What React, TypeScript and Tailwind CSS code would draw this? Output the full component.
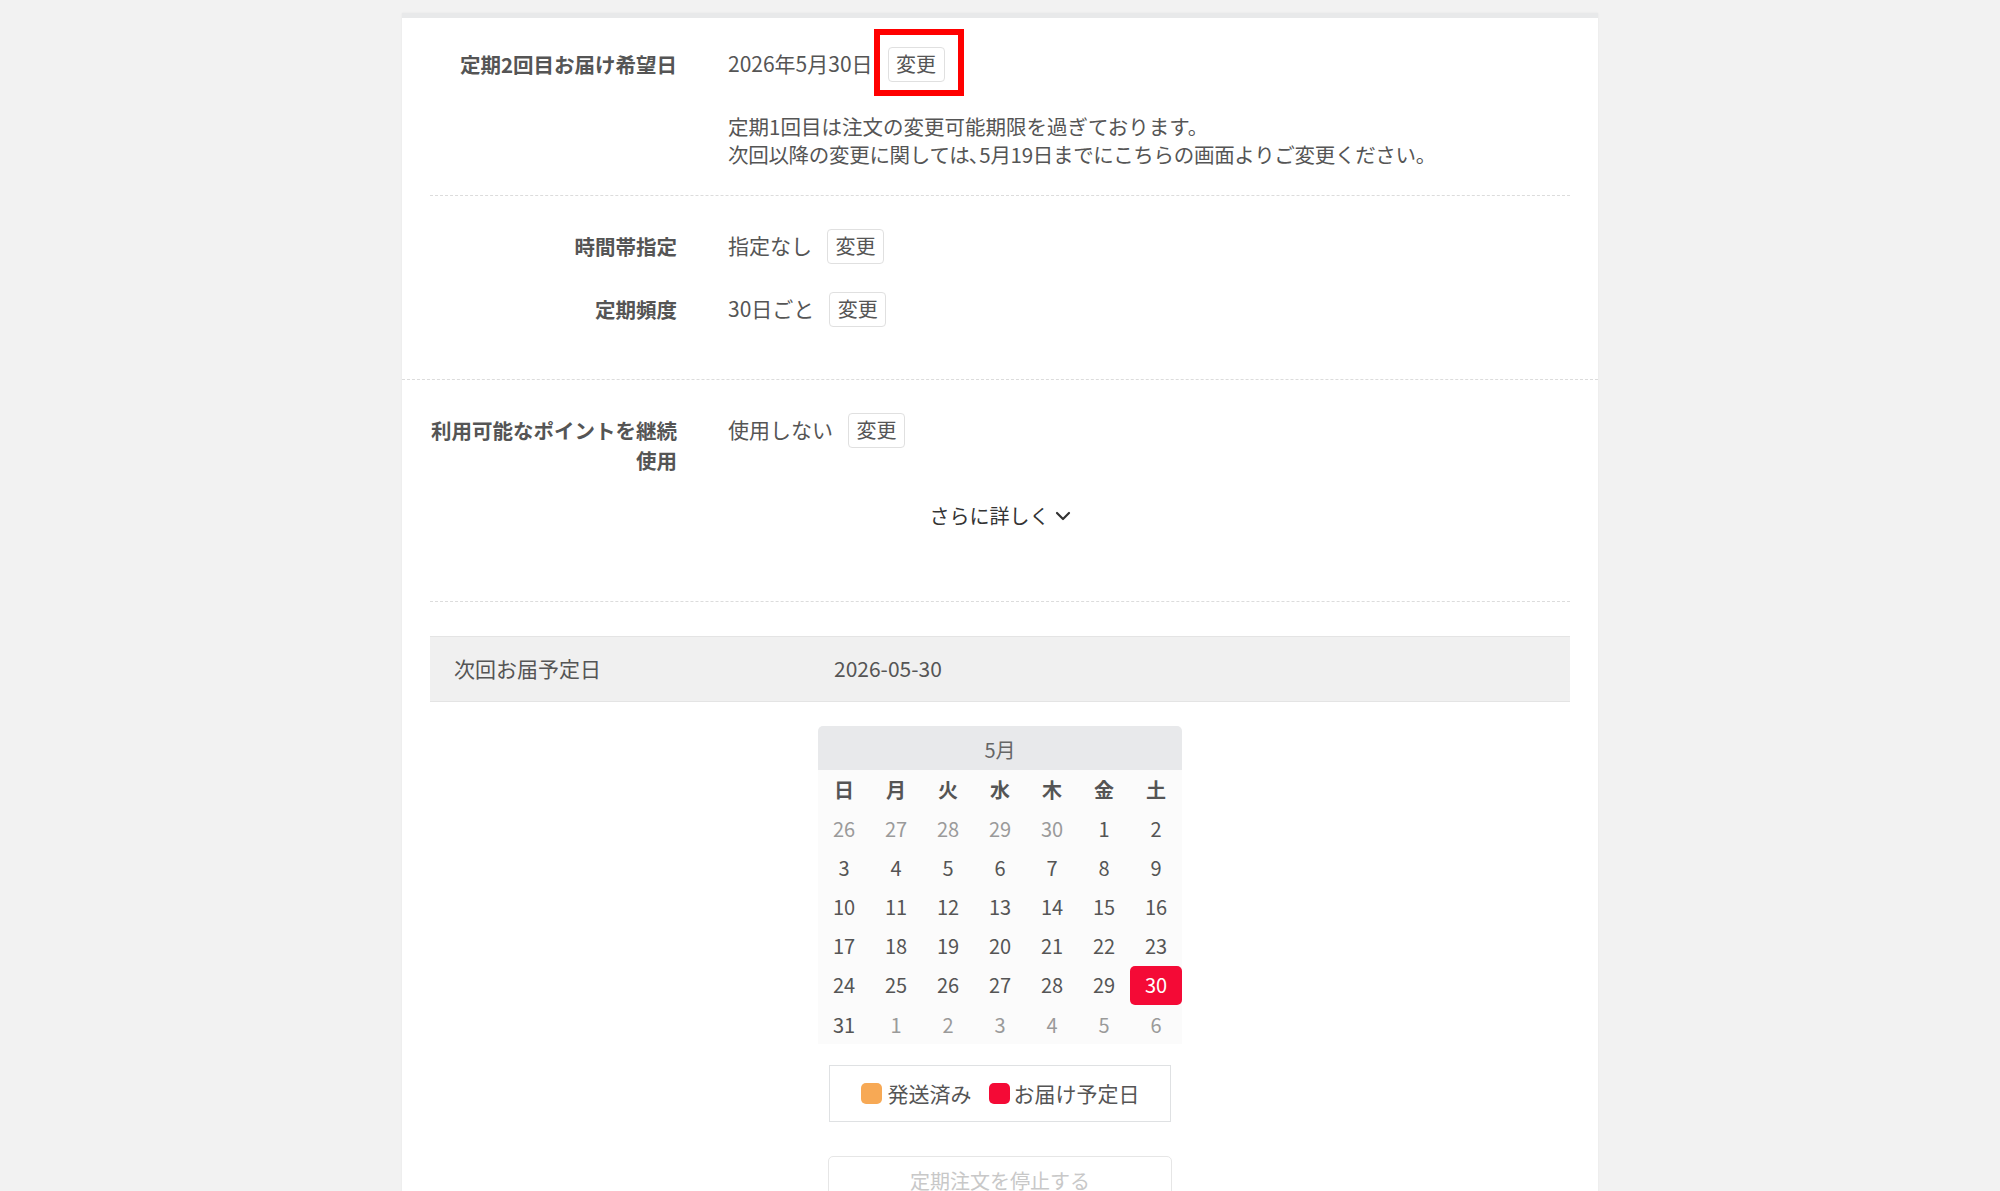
import React from "react";

const font = { fontFamily: '"Noto Sans CJK JP", "Noto Sans", sans-serif' };

const ChangeButton = ({ marked }: { marked?: boolean }) => (
  <span className="relative ml-[15px] inline-flex">
    <button className="h-[35px] w-[57px] rounded-[4px] border border-[#e0e0e0] bg-white text-[20px] leading-none text-[#555]">
      変更
    </button>
    {marked && (
      <span className="pointer-events-none absolute left-[-14px] top-[-18px] h-[67px] w-[90px] border-[6px] border-[#ff0000]" />
    )}
  </span>
);

const Row = ({
  label,
  value,
  marked,
  children,
}: {
  label: string;
  value: string;
  marked?: boolean;
  children?: React.ReactNode;
}) => (
  <div className="flex items-start">
    <div className="w-[247px] shrink-0 text-right text-[20.5px] font-bold leading-[30px] text-[#555]">
      {label}
    </div>
    <div className="ml-[51px]">
      <div className="flex h-[30px] items-center">
        <span className="text-[21px] text-[#555]">{value}</span>
        <ChangeButton marked={marked} />
      </div>
      {children}
    </div>
  </div>
);

const weekdays = ["日", "月", "火", "水", "木", "金", "土"];

const weeks = [
  [26, 27, 28, 29, 30, 1, 2],
  [3, 4, 5, 6, 7, 8, 9],
  [10, 11, 12, 13, 14, 15, 16],
  [17, 18, 19, 20, 21, 22, 23],
  [24, 25, 26, 27, 28, 29, 30],
  [31, 1, 2, 3, 4, 5, 6],
];

const Calendar = () => (
  <div className="mx-auto w-[364px]">
    <div className="flex h-[44px] items-center justify-center rounded-t-[5px] bg-[#e8e9eb] pt-[4px] text-[20px] text-[#666]">
      5月
    </div>
    <div className="grid grid-cols-7 bg-[#fbfbfb]">
      {weekdays.map((d) => (
        <div
          key={d}
          className="flex h-[39px] items-center justify-center text-[20px] font-bold text-[#555]"
        >
          {d}
        </div>
      ))}
      {weeks.map((week, wi) =>
        week.map((day, di) => {
          const muted = (wi === 0 && day > 20) || (wi === 5 && day < 20);
          const selected = wi === 4 && day === 30;
          return (
            <div
              key={`${wi}-${di}`}
              className={
                selected
                  ? "flex h-[39.2px] items-center justify-center rounded-[5px] bg-[#f40a36] text-[20px] text-white"
                  : muted
                  ? "flex h-[39.2px] items-center justify-center text-[20px] text-[#9a9a9a]"
                  : "flex h-[39.2px] items-center justify-center text-[20px] text-[#555]"
              }
            >
              {day}
            </div>
          );
        })
      )}
    </div>
  </div>
);

export default function App() {
  return (
    <div className="min-h-screen bg-[#f2f2f2] pt-[13px]" style={font}>
      <div className="mx-auto w-[1196px] border-t-[5px] border-[#e8e9ea] bg-white pb-[40px] shadow-[0_0_2px_rgba(0,0,0,0.06)]">
        <div className="border-b border-dashed border-[#dcdcdc]">
          <div className="px-[28px]">
            <div className="border-b border-dashed border-[#dcdcdc] pb-[27px] pt-[31px]">
              <Row label="定期2回目お届け希望日" value="2026年5月30日" marked>
                <div className="mt-[33px] text-[20.5px] leading-[28px] text-[#555]">
                  <p>定期1回目は注文の変更可能期限を過ぎております。</p>
                  <p className="tracking-[-0.3px]">
                    次回以降の変更に関しては､5月19日までにこちらの画面よりご変更ください。
                  </p>
                </div>
              </Row>
            </div>
            <div className="flex flex-col gap-[33px] pb-[55px] pt-[35px]">
              <Row label="時間帯指定" value="指定なし" />
              <Row label="定期頻度" value="30日ごと" />
            </div>
          </div>
        </div>

        <div className="px-[28px]">
          <div className="border-b border-dashed border-[#dcdcdc] pb-[70px] pt-[35px]">
            <Row label="利用可能なポイントを継続使用" value="使用しない" />
            <div className="mt-[26px] flex h-[30px] items-center justify-center gap-[5px] text-[20px] text-[#333]">
              <span>さらに詳しく</span>
              <svg width="16" height="10" viewBox="0 0 16 10" fill="none">
                <path
                  d="M2 2l6 6 6-6"
                  stroke="#333"
                  strokeWidth="2.2"
                  strokeLinecap="round"
                  strokeLinejoin="round"
                />
              </svg>
            </div>
          </div>

          <div className="mt-[34px] flex h-[66px] items-center border-y border-[#e4e4e4] bg-[#f0f0f0] pl-[24px] text-[21px] text-[#555]">
            <span className="w-[380px]">次回お届予定日</span>
            <span>2026-05-30</span>
          </div>

          <div className="mt-[24px]">
            <Calendar />
          </div>

          <div className="mx-auto mt-[21px] flex h-[57px] w-[342px] items-center justify-center border border-[#dfe1e3] text-[21px] text-[#555]">
            <span className="h-[21px] w-[21px] rounded-[5px] bg-[#f7a955]" />
            <span className="ml-[6px]">発送済み</span>
            <span className="ml-[17px] h-[21px] w-[21px] rounded-[5px] bg-[#f40a36]" />
            <span className="ml-[4px]">お届け予定日</span>
          </div>

          <div className="mx-auto mt-[34px] flex h-[50px] w-[344px] items-center justify-center rounded-[5px] border border-[#e6e6e6] text-[20px] text-[#c8c8c8]">
            定期注文を停止する
          </div>
        </div>
      </div>
    </div>
  );
}
